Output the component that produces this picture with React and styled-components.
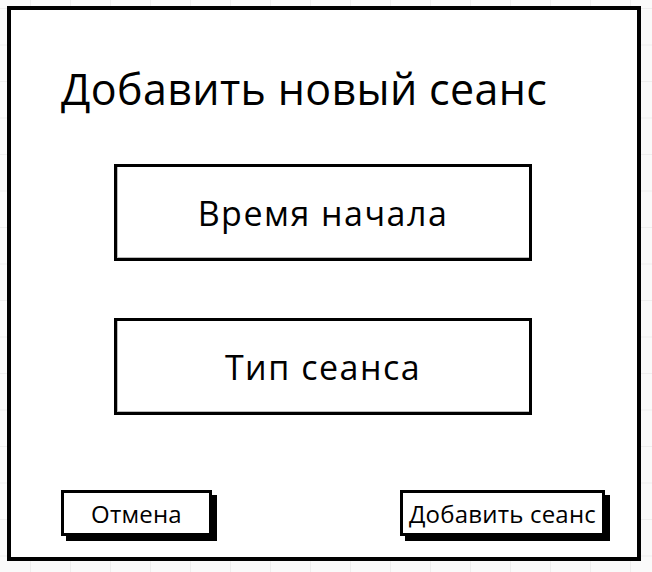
import styled, { createGlobalStyle } from "styled-components";

const GlobalStyle = createGlobalStyle`
  html, body {
    margin: 0;
    padding: 0;
  }
  body {
    width: 652px;
    height: 572px;
    overflow: hidden;
    background-color: #fafafa;
    background-image:
      linear-gradient(to right, #eeeeee 1px, transparent 1px),
      linear-gradient(to bottom, #eeeeee 1px, transparent 1px);
    background-size: 40px 36.5px;
    background-position: 30px 8px;
    font-family: "Open Sans", "Liberation Sans", sans-serif;
    color: #000;
  }
`;

const Dialog = styled.div`
  box-sizing: border-box;
  margin: 6px 0 0 7px;
  width: 634px;
  height: 555px;
  border: 4px solid #000;
  background: #fff;
  display: flex;
  flex-direction: column;
  padding: 53px 32px 20px 50px;
`;

const Title = styled.h1`
  margin: 0;
  font-size: 43px;
  font-weight: 400;
  line-height: 52px;
  letter-spacing: 0.35px;
`;

const Fields = styled.div`
  display: flex;
  flex-direction: column;
  align-items: center;
  gap: 57px;
  margin: 49px 0 0 -20px;
`;

const Field = styled.div`
  box-sizing: border-box;
  width: 418px;
  height: 97px;
  border: 3px solid #000;
  box-shadow: inset 0 -1px 0 #bbb, inset 1px 0 0 #bbb;
  display: flex;
  align-items: center;
  justify-content: center;
  font-size: 34px;
  letter-spacing: 1.5px;
`;

const Footer = styled.div`
  margin-top: auto;
  display: flex;
  justify-content: space-between;
  align-items: flex-start;
  padding-bottom: 1px;
`;

const Button = styled.button`
  box-sizing: border-box;
  width: ${(p) => p.$width}px;
  height: 46px;
  padding: 0;
  border: 3px solid #000;
  background: #fff;
  box-shadow: 5px 5px 0 #000;
  font-family: inherit;
  font-size: 24px;
  letter-spacing: 0.2px;
  color: #000;
  display: flex;
  align-items: center;
  justify-content: center;
`;

export default function App() {
  return (
    <>
      <GlobalStyle />
      <Dialog>
        <Title>Добавить новый сеанс</Title>
        <Fields>
          <Field>Время начала</Field>
          <Field>Тип сеанса</Field>
        </Fields>
        <Footer>
          <Button $width={151}>Отмена</Button>
          <Button $width={205}>Добавить сеанс</Button>
        </Footer>
      </Dialog>
    </>
  );
}
